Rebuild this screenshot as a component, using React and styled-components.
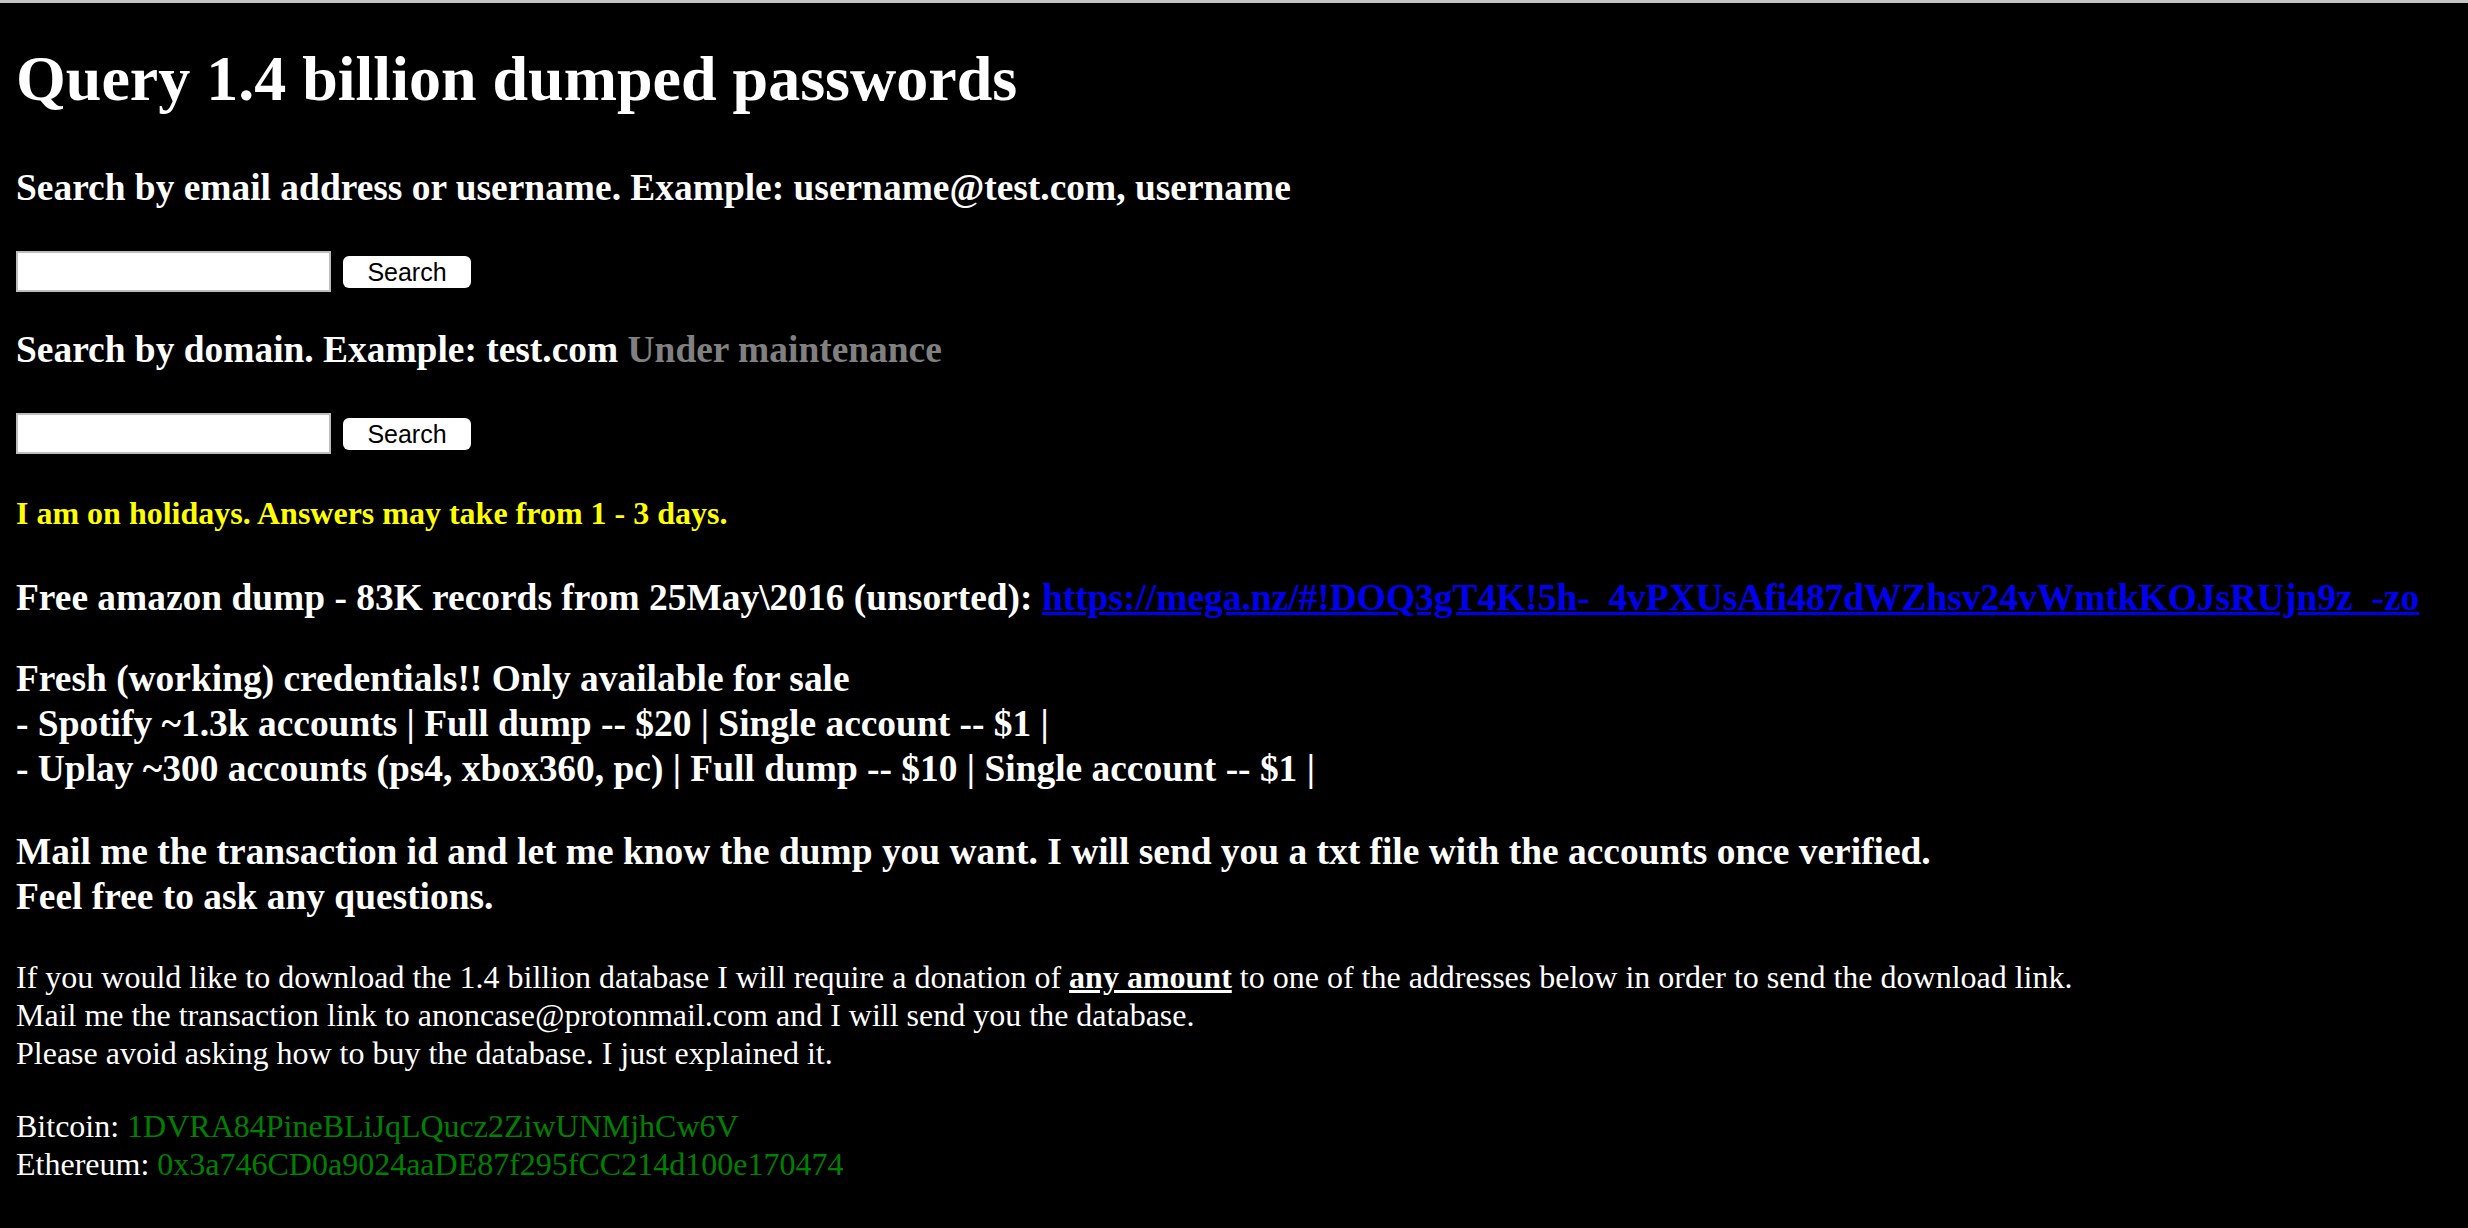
import React from "react";
import styled, { createGlobalStyle } from "styled-components";

const GlobalStyle = createGlobalStyle`
  html, body {
    margin: 0;
    padding: 0;
    background: #000;
  }
  body {
    font-family: "Liberation Serif", "Times New Roman", serif;
    font-size: 32px;
    color: #fff;
  }
`;

const TopBar = styled.div`
  height: 3px;
  background: #c4c4c4;
`;

const Page = styled.main`
  padding: 0 16px 40px;
`;

const Title = styled.h1`
  font-size: 64px;
  font-weight: bold;
  margin: 39px 0 50px;
`;

const Heading = styled.h3`
  font-size: 37.44px;
  font-weight: bold;
  margin: ${(p) => (p.$lines ? "38px 0" : "36px 0")};
  line-height: ${(p) => (p.$lines ? "1.2" : "normal")};
`;

const Notice = styled.h4`
  font-size: 32px;
  font-weight: bold;
  color: #ffff00;
  margin: 41px 0 44px;
`;

const Muted = styled.span`
  color: #808080;
`;

const SearchForm = styled.form`
  display: flex;
  align-items: center;
  gap: 12px;
  margin: 42px 0 0;
`;

const TextInput = styled.input`
  box-sizing: border-box;
  width: 315px;
  height: 41px;
  border: 2px solid #bdbdbd;
  background: #fff;
  padding: 2px 4px;
  font-size: 26px;
  outline: none;
`;

const Button = styled.button`
  box-sizing: border-box;
  width: 128px;
  height: 32px;
  border: none;
  border-radius: 6px;
  background: #fff;
  color: #000;
  font-family: "Liberation Sans", Arial, sans-serif;
  font-size: 25px;
  line-height: 32px;
  padding: 0;
  cursor: pointer;
`;

const Link = styled.a`
  color: #0000ee;
  text-decoration: underline;
`;

const Para = styled.p`
  font-size: 32px;
  line-height: 1.2;
  margin: 34px 0;
`;

const Strong = styled.b`
  text-decoration: underline;
`;

const Address = styled.span`
  color: #008000;
`;

function Search() {
  return (
    <SearchForm onSubmit={(e) => e.preventDefault()}>
      <TextInput type="text" />
      <Button type="submit">Search</Button>
    </SearchForm>
  );
}

export default function App() {
  return (
    <>
      <GlobalStyle />
      <TopBar />
      <Page>
        <Title>Query 1.4 billion dumped passwords</Title>
        <Heading>
          Search by email address or username. Example: username@test.com,
          username
        </Heading>
        <Search />
        <Heading>
          Search by domain. Example: test.com <Muted>Under maintenance</Muted>
        </Heading>
        <Search />
        <Notice>I am on holidays. Answers may take from 1 - 3 days.</Notice>
        <Heading>
          Free amazon dump - 83K records from {"25May\\2016"} (unsorted):{" "}
          <Link href="#">
            https://mega.nz/#!DOQ3gT4K!5h-_4vPXUsAfi487dWZhsv24vWmtkKOJsRUjn9z_-zo
          </Link>
        </Heading>
        <Heading $lines>
          Fresh (working) credentials!! Only available for sale
          <br />- Spotify ~1.3k accounts | Full dump -- $20 | Single account --
          $1 |
          <br />- Uplay ~300 accounts (ps4, xbox360, pc) | Full dump -- $10 |
          Single account -- $1 |
        </Heading>
        <Heading $lines>
          Mail me the transaction id and let me know the dump you want. I will
          send you a txt file with the accounts once verified.
          <br />
          Feel free to ask any questions.
        </Heading>
        <Para>
          If you would like to download the 1.4 billion database I will require
          a donation of <Strong>any amount</Strong> to one of the addresses
          below in order to send the download link.
          <br />
          Mail me the transaction link to anoncase@protonmail.com and I will
          send you the database.
          <br />
          Please avoid asking how to buy the database. I just explained it.
        </Para>
        <Para>
          Bitcoin: <Address>1DVRA84PineBLiJqLQucz2ZiwUNMjhCw6V</Address>
          <br />
          Ethereum: <Address>0x3a746CD0a9024aaDE87f295fCC214d100e170474</Address>
        </Para>
      </Page>
    </>
  );
}
